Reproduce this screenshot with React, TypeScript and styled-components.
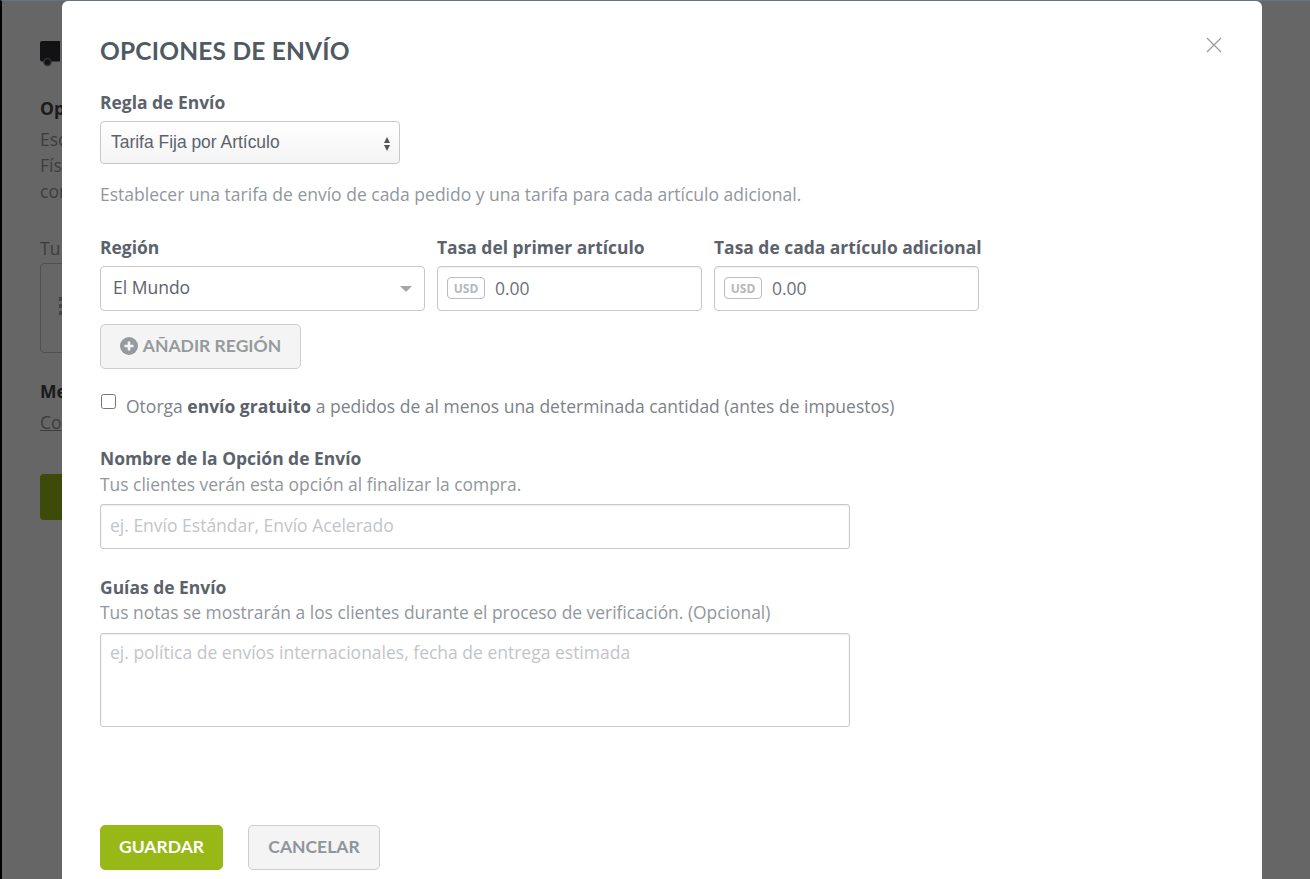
import React from "react";
import styled, { createGlobalStyle } from "styled-components";

const Global = createGlobalStyle`
  html, body { margin: 0; padding: 0; height: 100%; overflow: hidden; background: #fff; }
  body { font-family: "Open Sans", sans-serif; }
  * { box-sizing: border-box; }
`;

const Page = styled.div`
  height: 879px;
  border-left: 2px solid #000;
  border-top: 1px solid #64757f;
  padding: 39px 0 0 38px;
  color: #50575f;
  background: #fff;
  font-size: 17.5px;
  line-height: 26px;
`;
const Truck = styled.svg`
  display: block;
  width: 36px;
  height: 28px;
  margin-bottom: 27px;
`;
const BgTitle = styled.div`
  font-weight: 700;
  color: #444;
`;
const BgText = styled.div`
  color: #9a9a9a;
  white-space: nowrap;
`;
const BgIntro = styled(BgText)`
  margin-top: 5px;
`;
const BgLabel = styled(BgText)`
  margin-top: 31px;
  margin-bottom: 2px;
`;
const BgBox = styled.div`
  width: 300px;
  height: 90px;
  border: 1px solid #c9c9c9;
  border-radius: 4px;
  padding: 33px 0 0 18px;
  margin-bottom: 25px;
  display: flex;
  flex-direction: column;
  gap: 3px;
`;
const Grip = styled.span`
  width: 4px;
  height: 4px;
  background: #aaa;
`;
const BgLink = styled(BgText)`
  margin-top: 5px;
  text-decoration: underline;
`;
const BgButton = styled.div`
  width: 100px;
  height: 46px;
  margin-top: 39px;
  border-radius: 4px;
  background: #98b817;
`;

const Overlay = styled.div`
  position: fixed;
  inset: 1px 0 0 2px;
  background: rgba(0, 0, 0, 0.6);
`;
const Modal = styled.div`
  position: fixed;
  left: 62px;
  top: 1px;
  width: 1200px;
  height: 900px;
  background: #fff;
  border-radius: 6px 6px 0 0;
  padding: 33px 38px 0;
  color: #5b626b;
`;
const Close = styled.button`
  position: absolute;
  top: 35px;
  right: 39px;
  width: 18px;
  height: 18px;
  padding: 0;
  border: 0;
  background: none;
  color: #9a9a9a;
`;
const Title = styled.h1`
  margin: 0 0 22px;
  font: 700 24.5px/34px Lato, sans-serif;
  color: #4f5a63;
  text-transform: uppercase;
  letter-spacing: 0.2px;
`;
const Label = styled.label`
  display: block;
  font-weight: 700;
  font-size: 17.45px;
  line-height: 24px;
  color: #5b626b;
  white-space: nowrap;
`;
const Help = styled.p<{ $gap?: number }>`
  margin: ${(p) => p.$gap ?? 0}px 0 0;
  font-size: 17.5px;
  line-height: 24px;
  color: #91979d;
`;
const FieldHelp = styled(Help)`
  font-size: 17.43px;
`;
const SelectWrap = styled.div`
  position: relative;
  width: 300px;
  height: 43px;
  margin-top: 7px;
`;
const RuleSelect = styled.select`
  display: block;
  width: 100%;
  height: 100%;
  appearance: none;
  padding: 0 10px 2px;
  border: 1px solid #c8c8c8;
  border-radius: 4px;
  background: linear-gradient(#fff, #f4f4f4);
  font: 17.45px "Liberation Sans", sans-serif;
  color: #5b626b;
`;
const Updown = styled.span<{ $up?: boolean }>`
  position: absolute;
  right: 10px;
  top: ${(p) => (p.$up ? 16 : 24)}px;
  width: 0;
  height: 0;
  border-left: 3.5px solid transparent;
  border-right: 3.5px solid transparent;
  ${(p) => (p.$up ? "border-bottom: 6px solid #555;" : "border-top: 6px solid #555;")}
`;
const RateRow = styled.div`
  display: flex;
  gap: 12px;
  margin-top: 29px;
`;
const Column = styled.div<{ $w: number }>`
  width: ${(p) => p.$w}px;
  display: flex;
  flex-direction: column;
  gap: 7px;
`;
const RegionBox = styled.div`
  height: 45px;
  border: 1px solid #c8c8c8;
  border-radius: 4px;
  padding: 0 12px 3px;
  display: flex;
  align-items: center;
  justify-content: space-between;
  font-size: 17.5px;
  color: #5b626b;
`;
const Caret = styled.span`
  width: 0;
  height: 0;
  margin-top: 3px;
  border-left: 6px solid transparent;
  border-right: 6px solid transparent;
  border-top: 6px solid #a5a8ab;
`;
const MoneyBox = styled.div`
  height: 45px;
  border: 1px solid #c8c8c8;
  border-radius: 4px;
  box-shadow: inset 0 1px 2px rgba(0, 0, 0, 0.07);
  padding: 0 9px 1px;
  display: flex;
  align-items: center;
  gap: 10px;
  font-size: 17.5px;
  color: #6b7178;
`;
const Currency = styled.span`
  width: 38px;
  height: 22px;
  border: 1px solid #bbb;
  border-radius: 4px;
  display: flex;
  align-items: center;
  justify-content: center;
  font-size: 12px;
  font-weight: 700;
  color: #b5b8bb;
`;
const BaseButton = styled.button`
  height: 45px;
  border-radius: 5px;
  padding: 0 0 3px;
  font: 700 17.5px Lato, sans-serif;
  text-transform: uppercase;
`;
const AddButton = styled(BaseButton)`
  width: 201px;
  margin-top: 13px;
  display: flex;
  align-items: center;
  justify-content: center;
  gap: 5px;
  padding: 0 0 2px;
  border: 1px solid #cdcdcd;
  background: #f4f4f4;
  color: #969a9c;
`;
const CheckRow = styled.div`
  display: flex;
  align-items: flex-start;
  margin-top: 25px;
  font-size: 17.5px;
  line-height: 24px;
  color: #7c8288;
`;
const Check = styled.input`
  width: 15px;
  height: 15px;
  margin: 0 10px 0 1px;
`;
const Strong = styled.strong`
  color: #5b626b;
`;
const Section = styled.div<{ $gap: number }>`
  margin-top: ${(p) => p.$gap}px;
`;
const TextInput = styled.input`
  display: block;
  width: 750px;
  height: 45px;
  margin-top: 8px;
  padding: 0 9px 3px;
  border: 1px solid #c8c8c8;
  border-radius: 3px;
  box-shadow: inset 0 1px 2px rgba(0, 0, 0, 0.07);
  font: 17.5px "Open Sans", sans-serif;
  &::placeholder { color: #c2c5c8; opacity: 1; }
`;
const TextArea = styled.textarea`
  display: block;
  width: 750px;
  height: 94px;
  margin-top: 9px;
  padding: 6px 9px;
  border: 1px solid #c8c8c8;
  border-radius: 3px;
  box-shadow: inset 0 1px 2px rgba(0, 0, 0, 0.07);
  resize: none;
  font: 17.5px/24px "Open Sans", sans-serif;
  &::placeholder { color: #c2c5c8; opacity: 1; }
`;
const Actions = styled.div`
  display: flex;
  gap: 25px;
  margin-top: 98px;
`;
const Save = styled(BaseButton)`
  width: 123px;
  border: 1px solid #97b816;
  background: #97b816;
  color: #fff;
`;
const Cancel = styled(BaseButton)`
  width: 132px;
  border: 1px solid #cdcdcd;
  background: #f4f4f4;
  color: #8f959b;
`;

export default function App() {
  return (
    <>
      <Global />
      <Page>
        <Truck viewBox="0 0 36 28">
          <path fill="#2e2f33" d="M0 3a2 2 0 0 1 2-2h18v20.5H2a2 2 0 0 1-2-2zM22 6h6l6 7v8.5H22z" />
          <circle cx="7.5" cy="22" r="3.5" fill="#2e2f33" stroke="#777" strokeWidth="1.6" />
          <circle cx="26" cy="22" r="3.5" fill="#2e2f33" stroke="#777" strokeWidth="1.6" />
        </Truck>
        <BgTitle>Op</BgTitle>
        <BgIntro>Esc</BgIntro>
        <BgText>Fís</BgText>
        <BgText>con</BgText>
        <BgLabel>Tu</BgLabel>
        <BgBox>
          <Grip />
          <Grip />
          <Grip />
        </BgBox>
        <BgTitle>Me</BgTitle>
        <BgLink>Co</BgLink>
        <BgButton />
      </Page>
      <Overlay />
      <Modal>
        <Close aria-label="Cerrar">
          <svg width="18" height="18" viewBox="0 0 18 18">
            <path d="M2 2l14 14M16 2L2 16" stroke="currentColor" strokeWidth="1.2" fill="none" />
          </svg>
        </Close>
        <Title>Opciones de Envío</Title>
        <Label>Regla de Envío</Label>
        <SelectWrap>
          <RuleSelect defaultValue="a">
            <option value="a">Tarifa Fija por Artículo</option>
          </RuleSelect>
          <Updown $up />
          <Updown />
        </SelectWrap>
        <Help $gap={18}>Establecer una tarifa de envío de cada pedido y una tarifa para cada artículo adicional.</Help>
        <RateRow>
          <Column $w={325}>
            <Label>Región</Label>
            <RegionBox>
              El Mundo
              <Caret />
            </RegionBox>
          </Column>
          <Column $w={265}>
            <Label>Tasa del primer artículo</Label>
            <MoneyBox>
              <Currency>USD</Currency>
              0.00
            </MoneyBox>
          </Column>
          <Column $w={265}>
            <Label>Tasa de cada artículo adicional</Label>
            <MoneyBox>
              <Currency>USD</Currency>
              0.00
            </MoneyBox>
          </Column>
        </RateRow>
        <AddButton>
          <svg width="18" height="18" viewBox="0 0 18 18">
            <circle cx="9" cy="9" r="9" fill="#969a9c" />
            <path d="M9 4.5v9M4.5 9h9" stroke="#f4f4f4" strokeWidth="2.6" />
          </svg>
          Añadir Región
        </AddButton>
        <CheckRow>
          <Check type="checkbox" />
          <span>
            Otorga <Strong>envío gratuito</Strong> a pedidos de al menos una determinada cantidad (antes de impuestos)
          </span>
        </CheckRow>
        <Section $gap={28}>
          <Label>Nombre de la Opción de Envío</Label>
          <FieldHelp $gap={2}>Tus clientes verán esta opción al finalizar la compra.</FieldHelp>
          <TextInput placeholder="ej. Envío Estándar, Envío Acelerado" />
        </Section>
        <Section $gap={26}>
          <Label>Guías de Envío</Label>
          <FieldHelp $gap={1}>Tus notas se mostrarán a los clientes durante el proceso de verificación. (Opcional)</FieldHelp>
          <TextArea placeholder="ej. política de envíos internacionales, fecha de entrega estimada" />
        </Section>
        <Actions>
          <Save>Guardar</Save>
          <Cancel>Cancelar</Cancel>
        </Actions>
      </Modal>
    </>
  );
}
